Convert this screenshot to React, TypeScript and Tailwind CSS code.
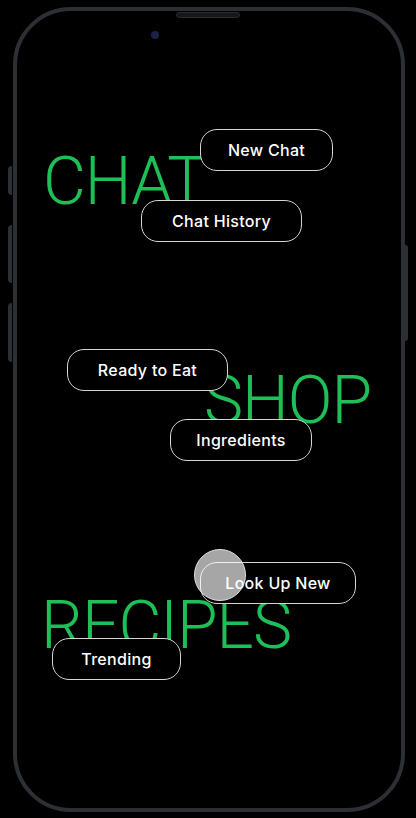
const headline =
  "font-['Roboto',Arial,sans-serif] font-light text-[66px] leading-[66px] tracking-[-1px] text-[#1fbf57] whitespace-nowrap";

function Pill({ label, className, children }: { label: string; className: string; children?: React.ReactNode }) {
  return (
    <button
      className={
        "relative z-10 h-[42px] shrink-0 flex items-center justify-center rounded-[17px] border-[1.5px] border-[#d4d4d4] bg-black text-white text-[16px] font-medium tracking-[0.3px] font-['Inter',sans-serif] " +
        className
      }
    >
      {label}
      {children}
    </button>
  );
}

function PhoneFrame({ children }: { children: React.ReactNode }) {
  return (
    <div className="relative ml-[13px] mt-[7px] w-[392px] h-[805px] rounded-[58px] border-[4px] border-[#2c2f33]">
      {/* side buttons */}
      <span className="absolute left-[-9px] top-[155px] w-[4px] h-[29px] rounded-l-sm bg-[#2c2f33]" />
      <span className="absolute left-[-9px] top-[214px] w-[4px] h-[58px] rounded-l-sm bg-[#2c2f33]" />
      <span className="absolute left-[-9px] top-[292px] w-[4px] h-[59px] rounded-l-sm bg-[#2c2f33]" />
      <span className="absolute right-[-7px] top-[234px] w-[3px] h-[96px] rounded-r-sm bg-[#2c2f33]" />
      {/* speaker + camera */}
      <span className="absolute left-[159px] top-[1px] w-[64px] h-[6px] rounded-full bg-[#161718] border border-[#2a2c2f]" />
      <span className="absolute left-[134px] top-[20px] w-[8px] h-[8px] rounded-full bg-[#1b2246]" />
      {children}
    </div>
  );
}

export default function App() {
  return (
    <div className="min-h-[818px] w-[416px] bg-black overflow-hidden">
      <PhoneFrame>
        <div className="flex flex-col items-start pt-[118px]">
          {/* CHAT */}
          <Pill label="New Chat" className="ml-[183px] w-[133px]" />
          <h2 className={headline + " -mt-[22px] ml-[26px]"}>CHAT</h2>
          <Pill label="Chat History" className="-mt-[15px] ml-[124px] w-[161px]" />

          {/* SHOP */}
          <Pill label="Ready to Eat" className="mt-[107px] ml-[50px] w-[161px]" />
          <h2 className={headline + " -mt-[23px] ml-[187px]"}>SHOP</h2>
          <Pill label="Ingredients" className="-mt-[15px] ml-[153px] w-[142px]" />

          {/* RECIPES */}
          <Pill label="Look Up New" className="mt-[101px] ml-[183px] w-[156px]">
            {/* touch indicator */}
            <span className="absolute -top-[14px] -left-[7px] w-[52px] h-[52px] rounded-full bg-white/65 border border-[#e0e0e0]" />
          </Pill>
          <h2 className={headline + " -mt-[11px] ml-[24px]"}>RECIPES</h2>
          <Pill label="Trending" className="-mt-[21px] ml-[35px] w-[129px]" />
        </div>
      </PhoneFrame>
    </div>
  );
}
